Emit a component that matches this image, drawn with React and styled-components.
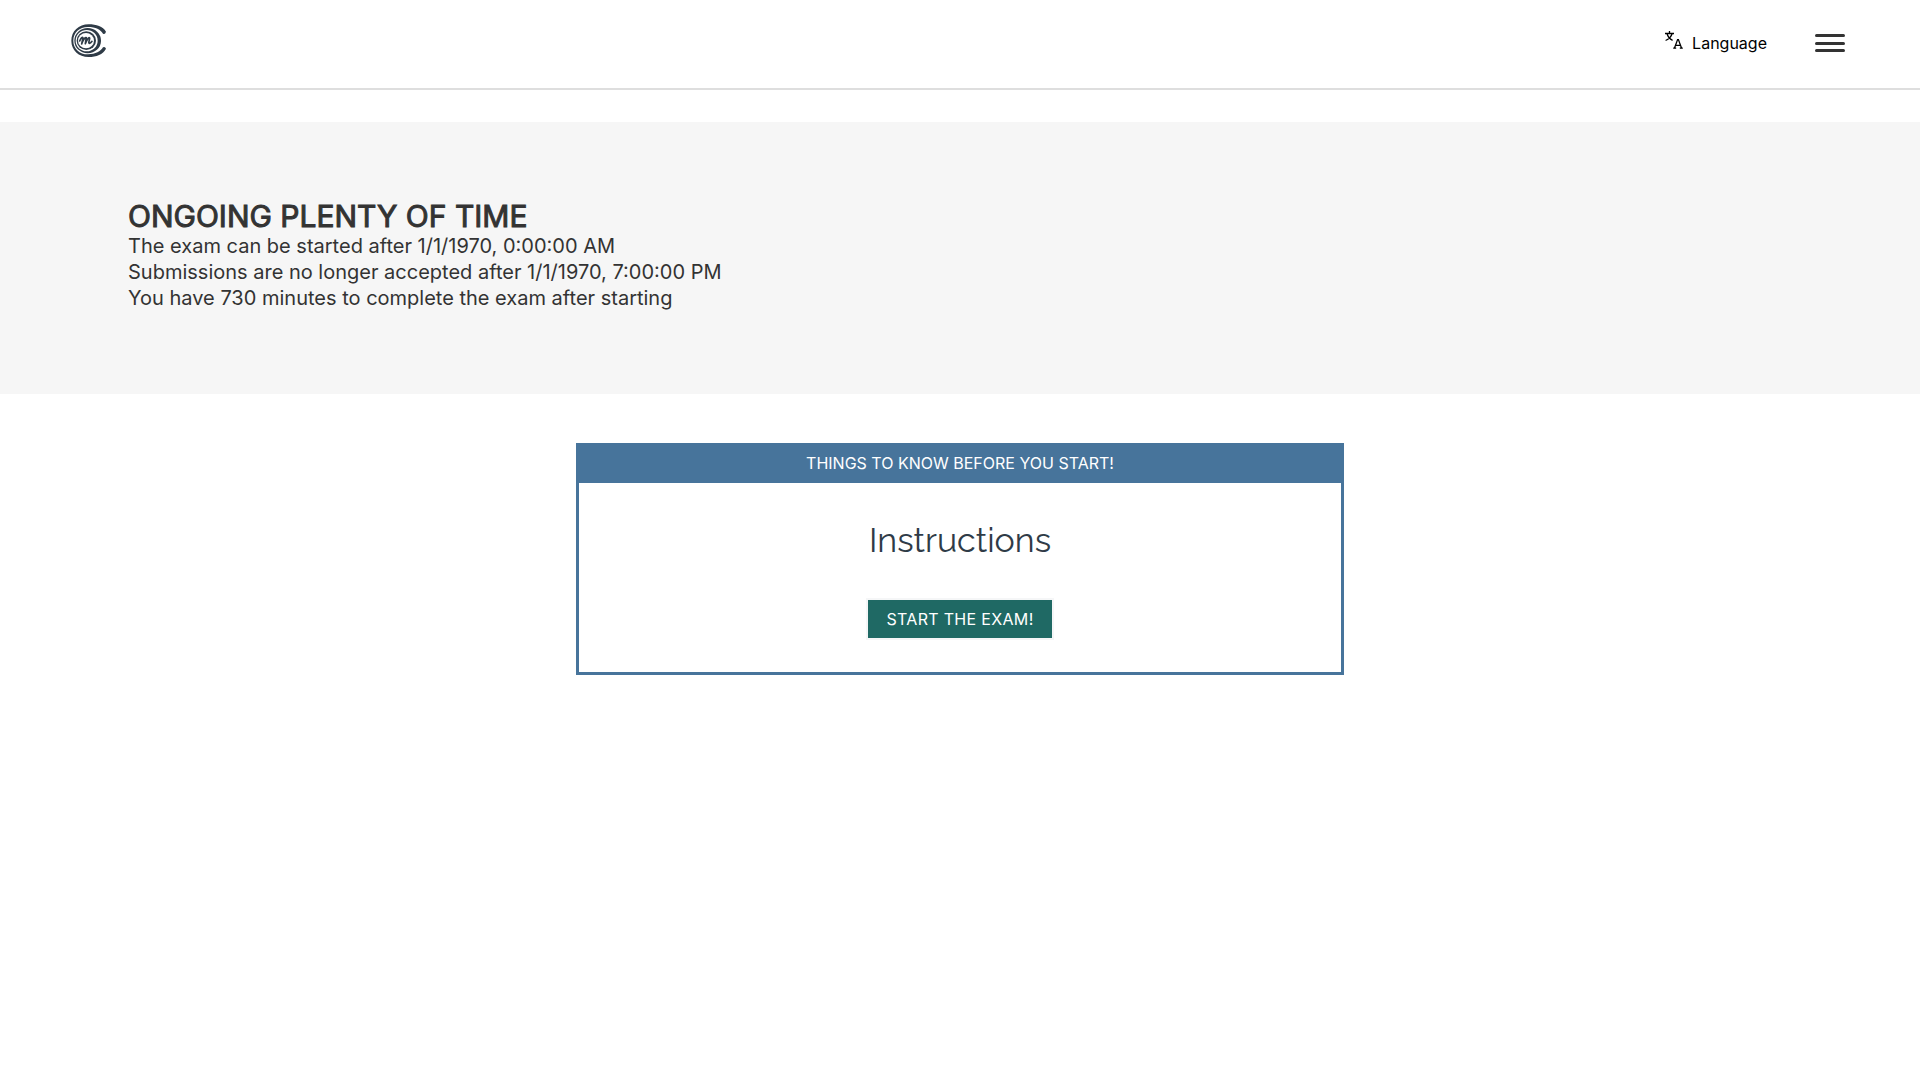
import React from "react";
import styled, { createGlobalStyle } from "styled-components";

const GlobalStyle = createGlobalStyle`
  *, *::before, *::after { box-sizing: border-box; }
  body {
    margin: 0;
    background: #fff;
    color: #333;
    font-family: Inter, "Liberation Sans", sans-serif;
  }
`;

const Header = styled.header`
  display: flex;
  align-items: center;
  justify-content: space-between;
  height: 90px;
  padding: 0 71px 2px;
  margin-bottom: 32px;
  border-bottom: 2px solid #dedede;
`;

const HomeLink = styled.a`
  display: flex;
  padding-bottom: 5px;
  color: #2f3b47;
`;

const Nav = styled.nav`
  display: flex;
  align-items: center;
  gap: 44px;
`;

const LanguageButton = styled.button`
  display: flex;
  align-items: center;
  gap: 8px;
  padding: 0;
  border: 0;
  background: none;
  color: #000;
  font: 400 16px/24px Inter, "Liberation Sans", sans-serif;
  cursor: pointer;

  svg { margin-bottom: 6px; }
`;

const MenuButton = styled.button`
  display: flex;
  flex-direction: column;
  justify-content: space-between;
  width: 38px;
  height: 26px;
  padding: 4px;
  border: 0;
  background: none;
  cursor: pointer;
`;

const MenuBar = styled.span`
  height: 3px;
  border-radius: 2px;
  background: #333;
`;

const Hero = styled.section`
  padding: 78px 128px 83px;
  background: #f6f6f6;
`;

const HeroTitle = styled.h1`
  margin: 0;
  font-size: 30px;
  line-height: 33px;
  font-weight: 400;
  -webkit-text-stroke: 1px currentColor;
  text-transform: uppercase;
`;

const HeroText = styled.p`
  margin: 0;
  font-size: 20px;
  line-height: 26px;
`;

const Card = styled.section`
  width: 40%;
  margin: 49px auto 0;
  border: 3px solid #47749b;
  text-align: center;
`;

const CardHeader = styled.div`
  padding: 5px 16px 8px;
  background: #47749b;
  color: #fff;
  font-size: 16px;
  line-height: 24px;
  text-transform: uppercase;
`;

const CardBody = styled.div`
  padding: 32px;
`;

const CardTitle = styled.h2`
  margin: 0 0 32px;
  color: #2f3b47;
  font: 400 34px/51px Raleway, Lato, "Open Sans", sans-serif;
`;

const StartButton = styled.button`
  display: block;
  margin: 0 auto;
  padding: 7px 18px;
  border: 2px solid #f5f6f7;
  background: #1f6964;
  background-clip: padding-box;
  color: #fff;
  font: 400 16px/24px Inter, "Liberation Sans", sans-serif;
  letter-spacing: 0.02em;
  text-transform: uppercase;
  cursor: pointer;
`;

const Logo = () => (
  <svg width="36" height="33" viewBox="33 27 108 99" fill="none" aria-hidden="true">
    <path
      fill="currentColor"
      d="M138 50C129 35 109 28 86 28C56 28 34 49 34 77C34 105 56 126 86 126C109 126 129 118 138 101Q135 93 129 97C122 109 107 118 84 118C58 118 40 101 40 77C40 53 58 36 84 36C107 36 122 44 129 56Q135 60 138 50Z"
    />
    <ellipse cx="83" cy="77" rx="40" ry="38" fill="currentColor" />
    <ellipse cx="80" cy="77" rx="33" ry="32" fill="#fff" />
    <ellipse cx="79" cy="77" rx="29" ry="28" fill="currentColor" />
    <ellipse cx="78" cy="77" rx="24" ry="23" fill="#fff" />
    <path
      d="M59 78C63 68 68 65 69 69L65 87C69 75 76 65 79 68L76 86C81 74 87 65 89 69C89 76 84 84 88 85C91 85 94 82 96 79"
      stroke="currentColor"
      strokeWidth="5"
      strokeLinecap="round"
      strokeLinejoin="round"
    />
  </svg>
);

const TranslateIcon = () => (
  <svg width="20" height="20" viewBox="0 0 20 20" fill="none" stroke="currentColor" strokeWidth="1.3" aria-hidden="true">
    <path d="M1 3.5H10M5.5 1V3.5M8.2 3.5C7.2 6.7 5 9.1 1.6 10.5M3 3.5C3.8 6.7 5.8 9.1 8.6 10.3" />
    <path d="M10.4 18.2L13.6 9.6H14.4L17.6 18.2M11.4 15.4H16.6M9.2 18.2H12.2M15.8 18.2H18.8" />
  </svg>
);

export default function App() {
  return (
    <>
      <GlobalStyle />
      <Header>
        <HomeLink href="#" aria-label="Home">
          <Logo />
        </HomeLink>
        <Nav>
          <LanguageButton type="button">
            <TranslateIcon />
            Language
          </LanguageButton>
          <MenuButton type="button" aria-label="Open menu">
            <MenuBar />
            <MenuBar />
            <MenuBar />
          </MenuButton>
        </Nav>
      </Header>
      <main>
        <Hero>
          <HeroTitle>Ongoing plenty of time</HeroTitle>
          <HeroText>The exam can be started after 1/1/1970, 0:00:00 AM</HeroText>
          <HeroText>Submissions are no longer accepted after 1/1/1970, 7:00:00 PM</HeroText>
          <HeroText>You have 730 minutes to complete the exam after starting</HeroText>
        </Hero>
        <Card>
          <CardHeader>Things to know before you start!</CardHeader>
          <CardBody>
            <CardTitle>Instructions</CardTitle>
            <StartButton type="button">Start the exam!</StartButton>
          </CardBody>
        </Card>
      </main>
    </>
  );
}
